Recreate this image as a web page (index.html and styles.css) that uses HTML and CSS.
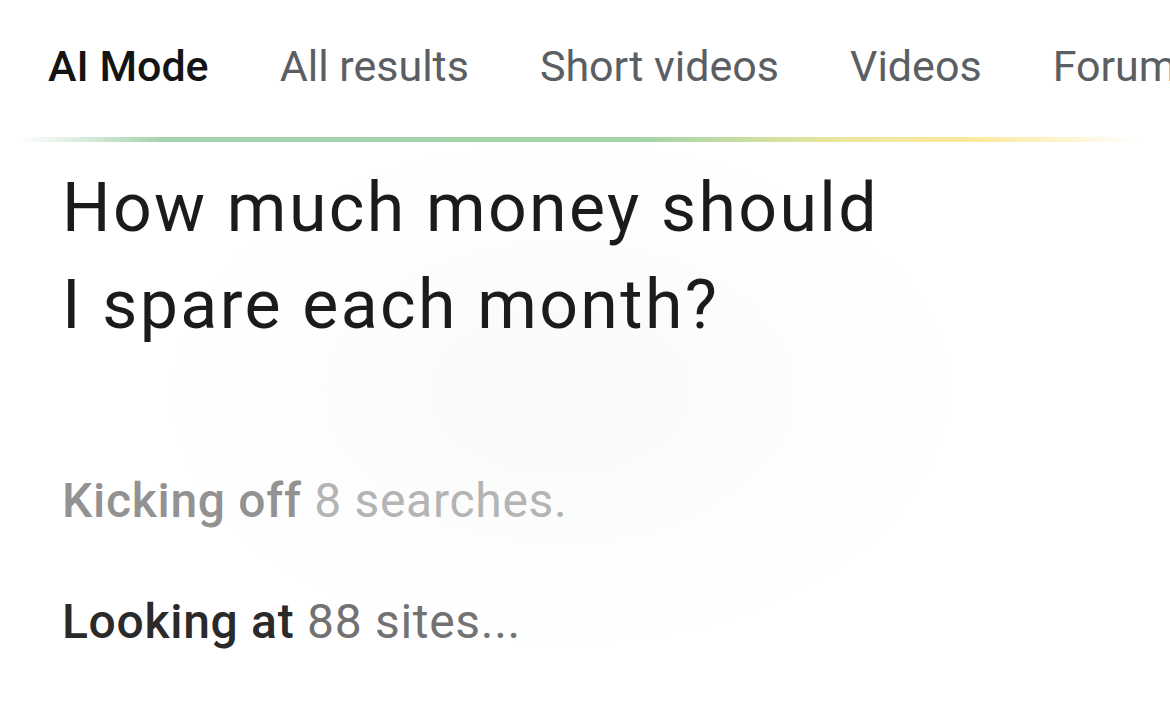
FILE: index.html
```html
<!DOCTYPE html>
<html lang="en">
<head>
    <meta charset="UTF-8">
    <meta name="viewport" content="width=device-width, initial-scale=1.0">
    <title>AI Mode</title>
    <link rel="stylesheet" href="styles.css">
</head>
<body>
    <nav class="tabs">
        <span class="tab active">AI Mode</span>
        <span class="tab">All results</span>
        <span class="tab">Short videos</span>
        <span class="tab">Videos</span>
        <span class="tab">Forums</span>
    </nav>
    <div class="glow-line"></div>
    <main class="answer">
        <h1 class="question">How much money should<br>I spare each month?</h1>
        <div class="steps">
            <div class="step faded"><b>Kicking off</b> <span>8 searches.</span></div>
            <div class="step"><b>Looking at</b> <span>88 sites...</span></div>
        </div>
    </main>
</body>
</html>
```

FILE: styles.css
```css
html, body {
    margin: 0;
    padding: 0;
    height: 100%;
}
body {
    font-family: Roboto, "Noto Sans", sans-serif;
    background-color: #fff;
    overflow: hidden;
}
.tabs {
    display: flex;
    gap: 71px;
    padding: 36px 0 0 48px;
    height: 96px;
    box-sizing: border-box;
    white-space: nowrap;
}
.tab {
    font-size: 43px;
    color: #5b5e62;
    line-height: 60px;
}
.tab.active {
    color: #141414;
    font-weight: 500;
}
.glow-line {
    height: 5px;
    margin: 41px 30px 0 20px;
    background: linear-gradient(90deg, rgba(220, 228, 222, 0) 0%, #a4d1ac 13%, #a2d2aa 55%, #eee89c 74%, #fbe9a0 86%, rgba(253, 238, 178, 0) 100%);
}
.answer {
    padding: 18px 0 0 62px;
    height: 560px;
    box-sizing: border-box;
    background: radial-gradient(ellipse 560px 360px at 560px 250px, rgba(240, 246, 241, 0.5), rgba(255, 255, 255, 0) 70%);
}
.question {
    margin: 0;
    font-size: 68px;
    font-weight: 400;
    line-height: 97px;
    color: #1b1b1b;
    letter-spacing: 2.4px;
}
.steps {
    margin-top: 117px;
    display: flex;
    flex-direction: column;
    gap: 61px;
}
.step {
    font-size: 48px;
    line-height: 60px;
    color: #727272;
    letter-spacing: 0.7px;
}
.step b {
    font-weight: 500;
    color: #2a2a2a;
}
.step.faded {
    color: #b4b4b4;
}
.step.faded b {
    color: #929292;
}
```
